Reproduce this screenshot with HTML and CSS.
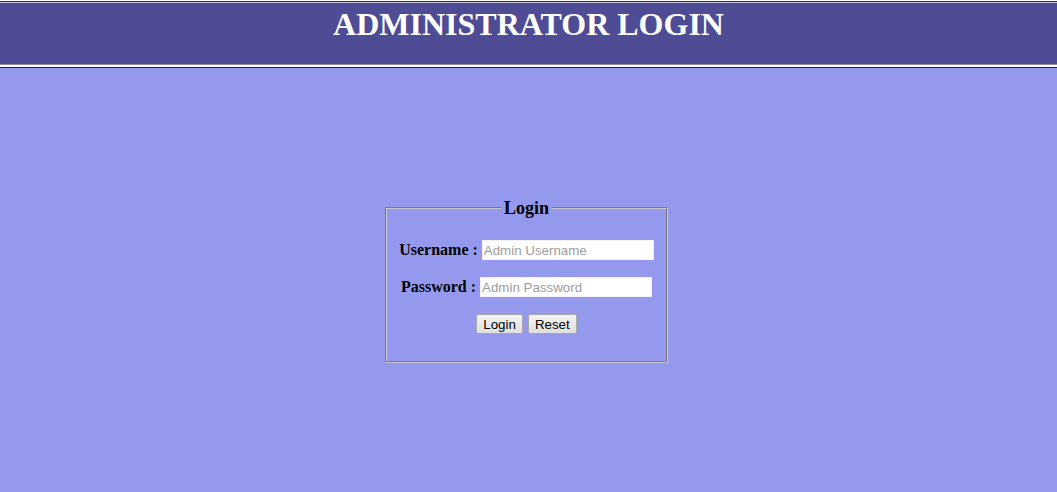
FILE: index.html
```html
<!DOCTYPE html>
<html>
<head>
<meta charset="utf-8">
<title>Administrator Login</title>
<link rel="stylesheet" href="styles.css">
</head>
<body>
<div class="header">
  <div class="header-inner">
    <div class="bar">
      <h1 class="title">ADMINISTRATOR LOGIN</h1>
    </div>
  </div>
</div>
<div class="main">
  <form class="login-form" onsubmit="return false;">
    <fieldset class="box">
      <legend class="legend">Login</legend>
      <div class="row">
        <label class="label">Username :</label>
        <input class="field" type="text" placeholder="Admin Username">
      </div>
      <div class="row">
        <label class="label">Password :</label>
        <input class="field" type="password" placeholder="Admin Password">
      </div>
      <div class="row buttons">
        <button class="btn" type="submit">Login</button>
        <button class="btn" type="reset">Reset</button>
      </div>
    </fieldset>
  </form>
</div>
</body>
</html>
```
FILE: styles.css
```css
html, body {
  margin: 0;
  padding: 0;
}
body {
  background: #9599ee;
  font-family: "Liberation Serif", "Times New Roman", serif;
  height: 492px;
  overflow: hidden;
}
.header {
  border-top: 1px solid #ffffff;
  border-bottom: 1px solid #222222;
}
.header-inner {
  border-top: 1px solid #333333;
  border-bottom: 2px solid #ffffff;
}
.bar {
  background: #4e4c94;
  border-top: 1px solid #c8c8dc;
  border-bottom: 1px solid #8a8a9a;
  height: 61px;
  box-sizing: content-box;
}
.title {
  margin: 0;
  padding-top: 3px;
  text-align: center;
  color: #ffffff;
  font-size: 32px;
  font-weight: bold;
  line-height: 37px;
}
.main {
  padding-top: 130px;
  padding-right: 4px;
}
.login-form {
  margin: 0;
}
.box {
  width: 283px;
  box-sizing: border-box;
  margin: 0 auto;
  padding: 0 10px 27px;
  border: 2px groove #c8c8d0;
}
.legend {
  margin: 0 auto;
  font-size: 18px;
  font-weight: bold;
  padding: 0 3px;
  line-height: 20px;
}
.row {
  display: flex;
  justify-content: center;
  align-items: center;
  gap: 4px;
  height: 20px;
  margin-top: 17px;
}
.row:first-of-type {
  margin-top: 22px;
}
.label {
  font-size: 16px;
  font-weight: bold;
  color: #000;
}
.field {
  width: 172px;
  height: 20px;
  box-sizing: border-box;
  border: 1px solid #f2f2f2;
  background: #ffffff;
  padding: 0 1px;
  font-family: "Liberation Sans", Arial, sans-serif;
  font-size: 13.33px;
  color: #000;
  outline: none;
}
.field::placeholder {
  color: #9d9d9d;
}
.buttons {
  gap: 5px;
}
.btn {
  height: 20px;
  padding: 0 6px;
  font-family: "Liberation Sans", Arial, sans-serif;
  font-size: 13.33px;
  color: #000;
  background: linear-gradient(#f4f4f4, #dedede);
  border: 1px solid #a7a7a7;
  border-radius: 2px;
}
```
